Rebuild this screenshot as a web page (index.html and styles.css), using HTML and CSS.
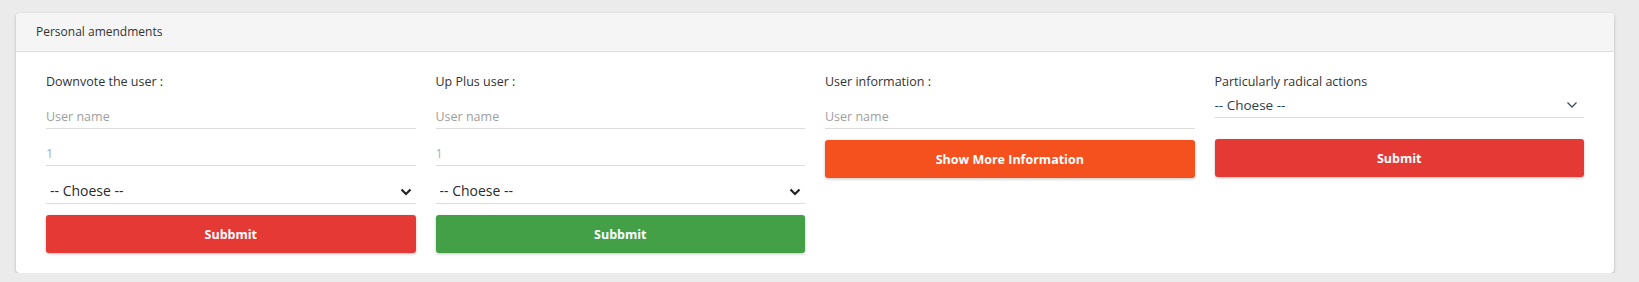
FILE: index.html
```html
<!DOCTYPE html>
<html lang="en">
<head>
    <meta charset="UTF-8">
    <title>Personal amendments</title>
    <link rel="stylesheet" href="styles.css">
</head>
<body>
    <div class="card">
        <div class="card-header">Personal amendments</div>
        <div class="card-body">
            <div class="col">
                <label class="field-label">Downvote the user :</label>
                <input type="text" class="field" placeholder="User name">
                <input type="number" class="field field-num" placeholder="1">
                <div class="select-wrap">
                    <select class="field field-select">
                        <option>-- Choese --</option>
                    </select>
                    <svg class="chevron" width="12" height="8" viewBox="0 0 12 8"><path d="M1.5 1.5 L6 6 L10.5 1.5" fill="none" stroke="#222" stroke-width="2.2"/></svg>
                </div>
                <button class="btn btn-red">Subbmit</button>
            </div>

            <div class="col">
                <label class="field-label">Up Plus user :</label>
                <input type="text" class="field" placeholder="User name">
                <input type="number" class="field field-num" placeholder="1">
                <div class="select-wrap">
                    <select class="field field-select">
                        <option>-- Choese --</option>
                    </select>
                    <svg class="chevron" width="12" height="8" viewBox="0 0 12 8"><path d="M1.5 1.5 L6 6 L10.5 1.5" fill="none" stroke="#222" stroke-width="2.2"/></svg>
                </div>
                <button class="btn btn-green">Subbmit</button>
            </div>

            <div class="col">
                <label class="field-label">User information :</label>
                <input type="text" class="field" placeholder="User name">
                <button class="btn btn-orange">Show More Information</button>
            </div>

            <div class="col">
                <label class="field-label">Particularly radical actions</label>
                <div class="select-wrap">
                    <select class="field field-select plain">
                        <option>-- Choese --</option>
                    </select>
                    <svg class="chevron thin" width="12" height="8" viewBox="0 0 12 8"><path d="M1.5 1.5 L6 6 L10.5 1.5" fill="none" stroke="#3c4f63" stroke-width="1.3"/></svg>
                </div>
                <button class="btn btn-red btn-far">Submit</button>
            </div>
        </div>
    </div>
</body>
</html>
```

FILE: styles.css
```css
* {
    margin: 0;
    padding: 0;
    box-sizing: border-box;
    font-family: 'Open Sans', 'Noto Sans', sans-serif;
}

body {
    background-color: #ebebeb;
    padding: 13px 25px 0 16px;
    color: #333;
}

.card {
    background: white;
    border-radius: 4px;
    box-shadow: 0 1px 3px rgba(0, 0, 0, 0.25);
    overflow: hidden;
}

.card-header {
    height: 39px;
    line-height: 38px;
    padding: 0 20px;
    background: #f5f5f5;
    border-bottom: 1px solid #dcdcdc;
    font-size: 12px;
    color: #333;
}

.card-body {
    display: grid;
    grid-template-columns: repeat(4, 1fr);
    column-gap: 20px;
    padding: 20px 30px;
    align-items: start;
}

.col {
    display: flex;
    flex-direction: column;
}

.field-label {
    font-size: 12.5px;
    line-height: 20px;
    color: #333;
}

.field {
    height: 37px;
    padding: 12px 0 0 0;
    border: none;
    border-bottom: 1px solid #dcdcdc;
    outline: none;
    background: transparent;
    font-size: 12.5px;
    color: #333;
    width: 100%;
}

.field::placeholder {
    color: #9e9e9e;
}

.field-num::placeholder {
    color: #9fb0c4;
}

.field-num {
    -moz-appearance: textfield;
}

.select-wrap {
    position: relative;
}

.field-select {
    appearance: none;
    -webkit-appearance: none;
    padding-left: 4px;
    height: 38px;
    font-size: 14px;
    color: #2a2a2a;
}

.field-select.plain {
    height: 26px;
    padding: 0;
    font-size: 13.5px;
    color: #2c3e50;
}

.chevron {
    position: absolute;
    right: 4px;
    top: 22px;
}

.chevron.thin {
    top: 9px;
    right: 6px;
}

.btn {
    margin-top: 11px;
    height: 38px;
    border: none;
    border-radius: 3px;
    color: white;
    font-size: 12.5px;
    font-weight: 700;
    box-shadow: 0 1px 3px rgba(0, 0, 0, 0.25);
    cursor: pointer;
}

.btn-far {
    margin-top: 21px;
}

.btn-red {
    background-color: #e53935;
}

.btn-green {
    background-color: #43a047;
}

.btn-orange {
    background-color: #f4511e;
}
```
